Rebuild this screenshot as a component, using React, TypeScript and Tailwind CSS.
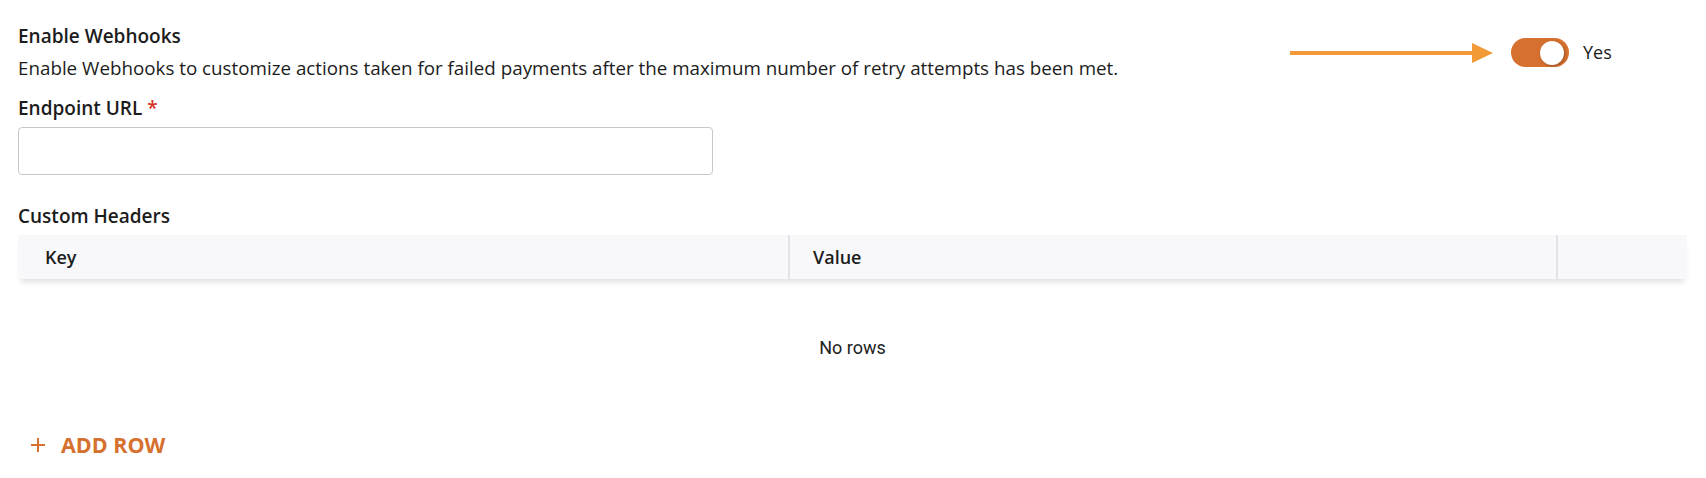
import React from 'react'

const font = { fontFamily: '"Open Sans", "Liberation Sans", sans-serif' }

const Toggle: React.FC<{ on: boolean }> = ({ on }) => (
    <div className={`relative h-[29px] w-[58px] rounded-full ${on ? 'bg-[#d6702e]' : 'bg-[#c4c4c4]'}`}>
        <div className="absolute right-[5px] top-[2.5px] h-[24px] w-[24px] rounded-full bg-white shadow-[1px_1px_3px_rgba(0,0,0,0.3)]" />
    </div>
)

const App: React.FC = () => {
    return (
        <div className="min-h-[478px] bg-white pl-[18px] pr-[19px] pt-[23px] text-[#1c1c1c] font-['Open_Sans','Liberation_Sans',sans-serif]">
            <div className="flex items-start">
                <div className="flex-1">
                    <p className="m-0 text-[19px] font-semibold leading-[26px]">Enable Webhooks</p>
                    <p className="mt-[7px] text-[18.8px] leading-[24px]">
                        Enable Webhooks to customize actions taken for failed payments after the maximum number of retry attempts has been met.
                    </p>
                </div>
                <div className="mt-[15px] flex items-center">
                    <svg width="203" height="22" viewBox="0 0 203 22" className="mr-[18px]">
                        <line x1="0" y1="11" x2="184" y2="11" stroke="#f29a37" strokeWidth="4" />
                        <polygon points="182,1 203,11 182,21" fill="#f29a37" />
                    </svg>
                    <div className="flex w-[176px] items-center gap-[14px]">
                        <Toggle on />
                        <span className="text-[18px]">Yes</span>
                    </div>
                </div>
            </div>

            <p className="mt-[15px] text-[19px] font-semibold leading-[26px]">
                Endpoint URL <span className="text-[#d93025]">*</span>
            </p>
            <input
                type="text"
                className="mt-[6px] block h-[48px] w-[695px] rounded-[4px] border border-[#c8c8cc] bg-white px-3 outline-none"
                style={font}
            />

            <p className="mt-[28px] text-[19px] font-semibold leading-[26px]">Custom Headers</p>

            <div className="mt-[6px]">
                <div className="relative z-10 grid h-[44px] grid-cols-[770px_768px_1fr] bg-[#f8f8fa] shadow-[0_6px_6px_-3px_rgba(0,0,0,0.13)]">
                    <div className="flex items-center pl-[27px] text-[18px] font-semibold">Key</div>
                    <div className="flex items-center border-l-2 border-[#e2e2ea] pl-[23px] text-[18px] font-semibold">Value</div>
                    <div className="border-l-2 border-[#e2e2ea]" />
                </div>
                <div className="flex h-[136px] items-center justify-center font-['Roboto',sans-serif] text-[18px] text-[#222]">
                    No rows
                </div>
            </div>

            <button className="mt-[10px] flex h-[40px] items-center gap-[15px] pl-[12px] pr-3 text-[#d6702e]">
                <svg width="16" height="16" viewBox="0 0 16 16">
                    <path d="M8 1v14M1 8h14" stroke="#d6702e" strokeWidth="2" fill="none" />
                </svg>
                <span className="text-[21.5px] font-bold">ADD ROW</span>
            </button>
        </div>
    )
}

export default App
